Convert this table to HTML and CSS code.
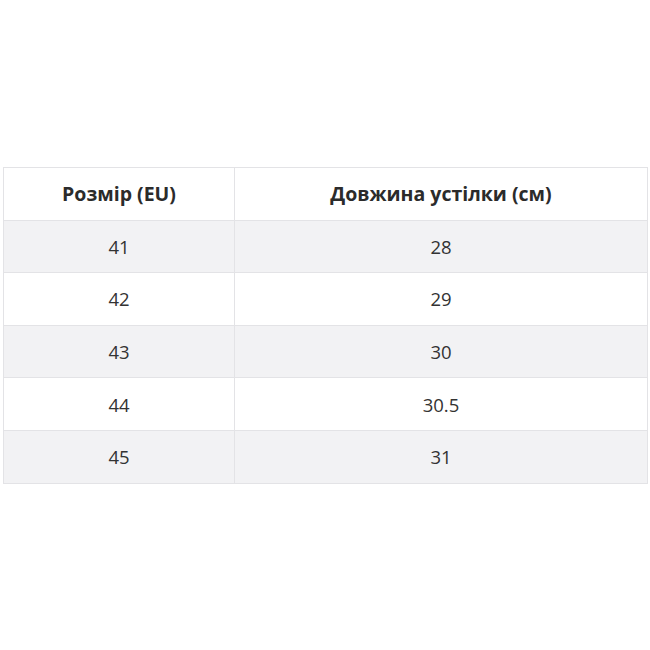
FILE: index.html
```html
<!DOCTYPE html>
<html lang="uk">
<head>
<meta charset="utf-8">
<link rel="stylesheet" href="styles.css">
</head>
<body>
<div class="page">
  <table class="sizes">
    <thead>
      <tr><th class="c1">Розмір (EU)</th><th class="c2">Довжина устілки (см)</th></tr>
    </thead>
    <tbody>
      <tr class="alt"><td>41</td><td>28</td></tr>
      <tr><td>42</td><td>29</td></tr>
      <tr class="alt"><td>43</td><td>30</td></tr>
      <tr><td>44</td><td>30.5</td></tr>
      <tr class="alt"><td>45</td><td>31</td></tr>
    </tbody>
  </table>
</div>
</body>
</html>
```

FILE: styles.css
```css
html, body {
  margin: 0;
  padding: 0;
  background: #ffffff;
}
.page {
  padding: 167px 3px 0 3px;
}
.sizes {
  width: 644px;
  border-collapse: collapse;
  font-family: "Open Sans", "Noto Sans", sans-serif;
  font-size: 18.5px;
  color: #333333;
  table-layout: fixed;
}
.sizes th, .sizes td {
  border: 1px solid #e3e3e6;
  text-align: center;
  height: 52.6px;
  padding: 0;
  box-sizing: border-box;
}
.sizes th {
  font-weight: 700;
  font-size: 19.5px;
  color: #2b2b2b;
}
.sizes td {
  font-weight: 400;
}
.c1 { width: 231px; }
.c2 { width: 413px; }
.alt td {
  background: #f2f2f4;
}
```
